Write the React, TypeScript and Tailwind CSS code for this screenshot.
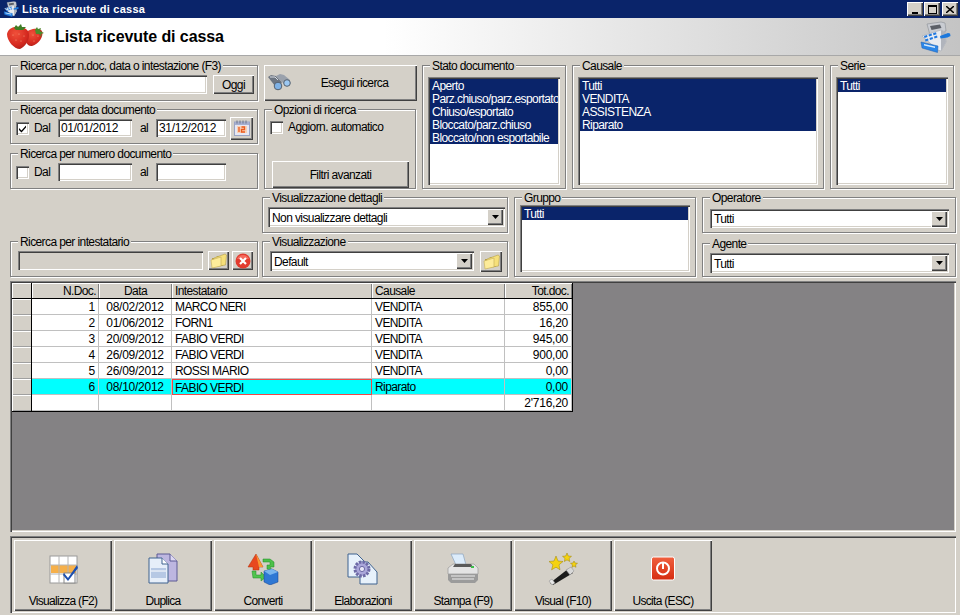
import React from "react";

const raised = "bg-[#d4d0c8] shadow-[inset_1px_1px_0_#fff,inset_-1px_-1px_0_#404040,inset_-2px_-2px_0_#808080]";
const sunken = "shadow-[inset_1px_1px_0_#808080,inset_2px_2px_0_#404040,inset_-1px_-1px_0_#fff,inset_-2px_-2px_0_#d4d0c8]";

function Group({ label, className, children }: { label: string; className: string; children?: React.ReactNode }) {
  return (
    <div className={"relative border border-[#808080] shadow-[inset_1px_1px_0_#fff,1px_1px_0_#fff] " + className}>
      <span className="absolute -top-[7px] left-[7px] bg-[#d4d0c8] px-[2px] leading-[14px] whitespace-nowrap">{label}</span>
      {children}
    </div>
  );
}

function Field({ className, value, disabled }: { className: string; value?: string; disabled?: boolean }) {
  return (
    <div className={`${sunken} ${disabled ? "bg-[#d4d0c8]" : "bg-white"} flex items-center pl-[3px] leading-[14px] tracking-[-0.3px] ${className}`}>{value}</div>
  );
}

function Check({ checked }: { checked?: boolean }) {
  return (
    <div className={`${sunken} bg-white w-[13px] h-[13px] shrink-0 flex items-center justify-center`}>
      {checked && (
        <svg width="9" height="9" viewBox="0 0 9 9"><path d="M1 4l2.5 2.5L8 1.5v2L3.5 8.5 1 6z" fill="#000" /></svg>
      )}
    </div>
  );
}

function ListBox({ items, className }: { items: string[]; className: string }) {
  return (
    <div className={`${sunken} bg-white p-[2px] ${className}`}>
      {items.map((t) => (
        <div key={t} className="bg-[#0a246a] text-white h-[13px] leading-[14px] pl-[2px] whitespace-nowrap overflow-hidden">{t}</div>
      ))}
    </div>
  );
}

function Combo({ value, className }: { value: string; className: string }) {
  return (
    <div className={`${sunken} bg-white flex items-center justify-between pl-[4px] pr-[2px] leading-[14px] ${className}`}>
      <span className="pt-[1px]">{value}</span>
      <div className={`${raised} w-[16px] h-[16px] flex items-center justify-center`}>
        <svg width="7" height="4" viewBox="0 0 7 4"><path d="M0 0h7L3.5 4z" fill="#000" /></svg>
      </div>
    </div>
  );
}

function Btn({ className, children }: { className: string; children?: React.ReactNode }) {
  return <div className={`${raised} flex items-center justify-center ${className}`}>{children}</div>;
}

function Register({ size }: { size: number }) {
  return (
    <svg width={size} height={size} viewBox="0 0 32 32">
      <path d="M8 3l14-2 4 1 1 8-16 4z" fill="#c9ccd2" stroke="#8a8e96" strokeWidth=".6" />
      <path d="M11 5l10-1.400 1.500 3.400-10 2z" fill="#5c6068" />
      <path d="M3 15l19-6 4 2 1 10-5 9-3-1z" fill="#e8ebf0" stroke="#9aa0aa" strokeWidth=".5" />
      <path d="M22 9l4 2 1 10-5 9z" fill="#b0b4bc" />
      <g fill="#1f78e0">
        <path d="M5 15l3-1 .5 2-3 1zM9.500 13.600l3-1 .5 2-3 1zM14 12.200l3-1 .5 2-3 1z" />
        <path d="M6 18.500l3-1 .5 2-3 1zM10.500 17l3-1 .5 2-3 1zM15 15.500l3-1 .5 2-3 1z" />
      </g>
      <path d="M2 21l17 4-.5 6.500L3 27z" fill="#2a86e8" stroke="#1a5cb0" strokeWidth=".5" />
      <path d="M5 23l11 2.500v1.500L5 24.500z" fill="#d8ebfc" />
      <path d="M21 15l8-3 2 .5.500 2.500-3 1.500-7 1z" fill="#1c78dc" />
    </svg>
  );
}

function Strawberry() {
  return (
    <svg width="38" height="25" viewBox="0 0 38 25">
      <defs>
        <radialGradient id="sb" cx=".4" cy=".3" r=".85"><stop offset="0" stopColor="#f0503a" /><stop offset=".6" stopColor="#d62a20" /><stop offset="1" stopColor="#9c1a14" /></radialGradient>
      </defs>
      <path d="M19 9c2-4 13-6 16-2 2 5-3 13-10 15-5 1-8-6-6-13z" fill="url(#sb)" />
      <path d="M28 6l2-3 1 2 3-1-1 3 4 2-3 1 1 3-3-3-3 0z" fill="#4e8a2c" />
      <path d="M0 10C1 5 6 2 12 3c6 0 10 3 10 8 0 6-4 12-9 14C7 25 0 17 0 10z" fill="url(#sb)" />
      <path d="M7 4l2-3 2 2 3-3 1 3 4 0-3 3-4 0-3 0z" fill="#3f7d24" />
      <g fill="#f9b890"><circle cx="6" cy="11" r=".5" /><circle cx="12" cy="10" r=".5" /><circle cx="17" cy="12" r=".5" /><circle cx="9" cy="16" r=".5" /><circle cx="14" cy="17" r=".5" /><circle cx="26" cy="11" r=".5" /><circle cx="31" cy="12" r=".5" /><circle cx="27" cy="17" r=".5" /></g>
    </svg>
  );
}

function Binoculars() {
  return (
    <svg width="24" height="20" viewBox="0 0 24 20">
      <path d="M1 4l3-2 5 1 6 6-3 5-4-1z" fill="#6e7682" />
      <path d="M9 3l4-2 4 1 6 5-2 4-5-1z" fill="#9aa1ac" />
      <path d="M3 4l5 0 3 3" fill="none" stroke="#d8dce2" />
      <circle cx="11" cy="13" r="3.800" fill="#7fb2e6" stroke="#55606e" />
      <circle cx="20" cy="10" r="3.300" fill="#9cc8f2" stroke="#55606e" />
    </svg>
  );
}

function Calendar() {
  return (
    <svg width="18" height="18" viewBox="0 0 18 18">
      <rect x="1.500" y="3" width="15" height="13.500" fill="#e6e8f4" stroke="#9aa4c4" />
      <rect x="2" y="3" width="14" height="3" fill="#a7b0d0" />
      <path d="M4 1.500v3M7 1.500v3M10 1.500v3M13 1.500v3" stroke="#6a7288" />
      <rect x="4" y="7" width="10" height="7" fill="#f9d0b4" />
      <path d="M6 8v5M8.500 8h3v2.500h-3V13h3.500" stroke="#ea5a1e" strokeWidth="1.300" fill="none" />
    </svg>
  );
}

function Folder() {
  return (
    <svg width="17" height="16" viewBox="0 0 17 16">
      <path d="M2 5h4l1-2h6v10H2z" fill="#b9a24a" />
      <path d="M4 5l11-4 1.500 1-1 10-12 2z" fill="#f6e07a" stroke="#b4a04c" strokeWidth=".6" />
      <path d="M1 7l10-3v9l-9 2z" fill="#fdec9a" stroke="#c4ad55" strokeWidth=".6" />
    </svg>
  );
}

function CloseRed() {
  return (
    <svg width="16" height="16" viewBox="0 0 16 16">
      <circle cx="8" cy="8" r="7.500" fill="#e23b2e" />
      <path d="M2 6a6.500 6.500 0 0112 0z" fill="#f56b5d" />
      <path d="M5 5l6 6M11 5l-6 6" stroke="#fff" strokeWidth="2.200" />
    </svg>
  );
}

const IconView = () => (
  <svg width="32" height="32" viewBox="0 0 32 32">
    <rect x="3" y="3" width="27" height="27" fill="#fff" stroke="#9a9a9a" />
    <rect x="4" y="12" width="25" height="8" fill="#f6b04a" />
    <path d="M12 3v27M21 3v27M3 12h27M3 21h27" stroke="#b4b4b4" />
    <rect x="17" y="20" width="11" height="10" fill="#fff" stroke="#888" />
    <path d="M17 20l4 5L30 12l1 3-10 13-5-6z" fill="#1c4fb0" />
  </svg>
);
const IconDup = () => (
  <svg width="32" height="32" viewBox="0 0 32 32">
    <path d="M10 1h13l7 7v20H10z" fill="#bdb6e0" stroke="#5c5a94" />
    <path d="M23 1v7h7" fill="#ddd8f2" stroke="#5c5a94" />
    <path d="M2 5h13l6 6v19H2z" fill="#e6eef9" stroke="#3f628f" />
    <path d="M15 5v6h6" fill="#fff" stroke="#3f628f" />
    <rect x="4" y="15" width="15" height="10" fill="#b6c8e4" />
    <path d="M4 18h15" stroke="#fff" />
  </svg>
);
const IconConv = () => (
  <svg width="32" height="32" viewBox="0 0 32 32">
    <path d="M9 1l7 13h-4v3H6v-3H1z" fill="#e8481f" stroke="#b0300e" strokeWidth=".5" />
    <path d="M9 1l7 13h-4z" fill="#f89a34" />
    <path d="M16 6h7l4 3v5h-4l2 3-5-1v-4h3V9h-7z" fill="#4cc04a" stroke="#1e8a24" strokeWidth=".5" />
    <path d="M5 18h4v4h5v-3l5 5-5 4v-3H6z" fill="#50c44e" stroke="#1e8a24" strokeWidth=".5" />
    <path d="M17 18l8-2 6 3v10l-8 3-6-3z" fill="#2f78d4" stroke="#123f8c" strokeWidth=".5" />
    <path d="M17 18l8-2 6 3-8 3z" fill="#79b5ee" />
  </svg>
);
const IconElab = () => (
  <svg width="32" height="32" viewBox="0 0 32 32">
    <path d="M1 1h9l8 8v15H1z" fill="#e7f1fb" stroke="#3f628f" />
    <path d="M13 9h8l9 10v12H13z" fill="#e7f1fb" stroke="#3f628f" />
    <circle cx="15" cy="16" r="7" fill="#aaa6da" stroke="#6d6aa6" strokeWidth="3" strokeDasharray="2.5 1.2" />
    <circle cx="15" cy="16" r="2.600" fill="#e7e6f6" stroke="#6d6aa6" />
  </svg>
);
const IconPrint = () => (
  <svg width="32" height="32" viewBox="0 0 32 32">
    <path d="M4 1h12l3 11H9z" fill="#dcecfb" stroke="#8aa4c0" strokeWidth=".7" />
    <path d="M1 15l5-4h21l4 4v6H1z" fill="#e4e4e4" stroke="#9a9a9a" strokeWidth=".7" />
    <path d="M1 21h30v6l-3 3H4l-3-3z" fill="#9b9b9b" />
    <path d="M4 23h24M5 26h22" stroke="#eee" />
    <path d="M8 11h16l2 3H6z" fill="#5a5a5a" />
    <rect x="24" y="13" width="3" height="2" fill="#3fbf4a" />
  </svg>
);
const IconWand = () => (
  <svg width="32" height="32" viewBox="0 0 32 32">
    <path d="M3 30l18-14 5 4-20 12z" fill="#1c1c1c" />
    <path d="M2 28l3 4 3-2-3-4z" fill="#e6e6e6" stroke="#888" strokeWidth=".5" />
    <path d="M19 17l5-3 3 4-4 4z" fill="#d8d8d8" stroke="#888" strokeWidth=".5" />
    <path d="M9 3l2 5 5 .5-4 3.300 1 5-4-2.600-4.400 2.600 1.300-5L2 8.500 7 8z" fill="#f5d210" stroke="#9a8308" strokeWidth=".5" />
    <path d="M20 0l1.300 3 3.200.3-2.400 2.100.7 3.100-2.800-1.600-2.700 1.600.7-3.100L15.500 3.300 18.700 3z" fill="#f5d210" stroke="#9a8308" strokeWidth=".5" />
    <path d="M27 8l1 2 2.500.3-2 1.500.5 2.500-2-1.300-2 1.300.5-2.500-2-1.500 2.500-.3z" fill="#f5d210" stroke="#9a8308" strokeWidth=".5" />
  </svg>
);
const IconExit = () => (
  <svg width="32" height="32" viewBox="0 0 32 32">
    <defs>
      <linearGradient id="ex" x1="0" y1="0" x2="0" y2="1"><stop offset="0" stopColor="#f0603e" /><stop offset="1" stopColor="#d62c10" /></linearGradient>
    </defs>
    <rect x="4.500" y="4" width="23" height="23" rx="2" fill="url(#ex)" stroke="#fff" />
    <circle cx="16" cy="15.500" r="6" fill="none" stroke="#fff" strokeWidth="2" />
    <path d="M16 10v6" stroke="#fff" strokeWidth="2" />
  </svg>
);

const cols = ["w-[67px]", "w-[73px]", "w-[200px]", "w-[133px]", "w-[67px]"];
const rows = [
  ["1", "08/02/2012", "MARCO NERI", "VENDITA", "855,00"],
  ["2", "01/06/2012", "FORN1", "VENDITA", "16,20"],
  ["3", "20/09/2012", "FABIO VERDI", "VENDITA", "945,00"],
  ["4", "26/09/2012", "FABIO VERDI", "VENDITA", "900,00"],
  ["5", "26/09/2012", "ROSSI MARIO", "VENDITA", "0,00"],
  ["6", "08/10/2012", "FABIO VERDI", "Riparato", "0,00"],
  ["", "", "", "", "2'716,20"],
];
const aligns = ["text-right pr-[3px]", "text-center", "text-left pl-[3px]", "text-left pl-[3px]", "text-right pr-[3px]"];

const tools: [string, React.ReactNode][] = [
  ["Visualizza (F2)", <IconView />],
  ["Duplica", <IconDup />],
  ["Converti", <IconConv />],
  ["Elaborazioni", <IconElab />],
  ["Stampa (F9)", <IconPrint />],
  ["Visual (F10)", <IconWand />],
  ["Uscita (ESC)", <IconExit />],
];

export default function App() {
  return (
    <div className="w-[960px] h-[615px] overflow-hidden bg-[#d4d0c8] text-black text-[12px] tracking-[-0.6px] flex flex-col font-['Liberation_Sans',Arial,sans-serif]">
      <div className="h-[18px] shrink-0 bg-[#0a246a] flex items-center justify-between pl-[3px] pr-[2px]">
        <div className="flex items-center gap-[3px]">
          <Register size={16} />
          <span className="text-white font-bold text-[11px] tracking-[0.25px]">Lista ricevute di cassa</span>
        </div>
        <div className="flex">
          <Btn className="w-[16px] h-[14px] mr-[1px] items-end pb-[2px]"><div className="w-[6px] h-[2px] bg-black" /></Btn>
          <Btn className="w-[16px] h-[14px] mr-[2px]"><div className="w-[9px] h-[9px] border border-black border-t-2" /></Btn>
          <Btn className="w-[16px] h-[14px]">
            <svg width="8" height="7" viewBox="0 0 8 7"><path d="M0 0l8 7M8 0L0 7" stroke="#000" strokeWidth="1.500" /></svg>
          </Btn>
        </div>
      </div>

      <div className="h-[38px] shrink-0 border-b border-[#a8a8a8] bg-[linear-gradient(90deg,#fff_40%,#c4c4c4_100%)] flex items-center justify-between pl-[7px] pr-[9px]">
        <div className="flex items-center">
          <Strawberry />
          <span className="ml-[10px] text-[16px] font-bold tracking-[-0.08px]">Lista ricevute di cassa</span>
        </div>
        <Register size={32} />
      </div>

      <div className="mt-[9px] ml-[10px] h-[124px] shrink-0 flex">
        <div className="w-[248px] flex flex-col">
          <Group label="Ricerca per n.doc, data o intestazione (F3)" className="h-[36px] flex items-start pl-[4px] pt-[9px]">
            <Field className="w-[192px] h-[19px]" />
            <Btn className="w-[41px] h-[19px] ml-[6px]">Oggi</Btn>
          </Group>
          <Group label="Ricerca per data documento" className="h-[35px] mt-[8px] flex items-center pl-[5px] pt-[3px]">
            <Check checked />
            <span className="ml-[5px] w-[24px]">Dal</span>
            <Field className="w-[74px] h-[18px]" value="01/01/2012" />
            <span className="w-[24px] text-center">al</span>
            <Field className="w-[70px] h-[18px]" value="31/12/2012" />
            <Btn className="w-[23px] h-[23px] ml-[4px]"><Calendar /></Btn>
          </Group>
          <Group label="Ricerca per numero documento" className="h-[36px] mt-[9px] flex items-center pl-[5px] pt-[2px]">
            <Check />
            <span className="ml-[5px] w-[24px]">Dal</span>
            <Field className="w-[74px] h-[18px]" />
            <span className="w-[24px] text-center">al</span>
            <Field className="w-[70px] h-[18px]" />
          </Group>
        </div>

        <div className="w-[153px] ml-[6px] flex flex-col">
          <Btn className="h-[36px] relative">
            <span className="absolute left-[3px] top-[8px]"><Binoculars /></span>
            <span className="ml-[28px]">Esegui ricerca</span>
          </Btn>
          <Group label="Opzioni di ricerca" className="h-[80px] mt-[8px] w-[152px] flex flex-col pl-[5px] pt-[8px]">
            <div className="flex items-center gap-[5px]"><Check /><span>Aggiorn. automatico</span></div>
            <Btn className="w-[137px] h-[27px] ml-[2px] mt-[25px]">Filtri avanzati</Btn>
          </Group>
        </div>

        <Group label="Stato documento" className="w-[144px] ml-[5px] p-[5px] pt-[11px]">
          <ListBox className="h-[108px]" items={["Aperto", "Parz.chiuso/parz.esportato", "Chiuso/esportato", "Bloccato/parz.chiuso", "Bloccato/non esportabile"]} />
        </Group>
        <Group label="Causale" className="w-[252px] ml-[6px] p-[5px] pt-[11px]">
          <ListBox className="h-[108px]" items={["Tutti", "VENDITA", "ASSISTENZA", "Riparato"]} />
        </Group>
        <Group label="Serie" className="w-[124px] ml-[6px] p-[5px] pt-[11px]">
          <ListBox className="h-[108px]" items={["Tutti"]} />
        </Group>
      </div>

      <div className="mt-[8px] ml-[10px] h-[80px] shrink-0 flex">
        <div className="w-[248px] flex flex-col justify-end">
          <Group label="Ricerca per intestatario" className="h-[36px] flex items-start pl-[7px] pt-[9px]">
            <Field disabled className="w-[185px] h-[19px]" />
            <Btn className="w-[21px] h-[19px] ml-[5px]"><Folder /></Btn>
            <Btn className="w-[21px] h-[19px] ml-[3px]"><CloseRed /></Btn>
          </Group>
        </div>
        <div className="w-[246px] ml-[4px] flex flex-col justify-between">
          <Group label="Visualizzazione dettagli" className="h-[36px] pl-[5px] pt-[9px]">
            <Combo className="w-[237px] h-[20px]" value="Non visualizzare dettagli" />
          </Group>
          <Group label="Visualizzazione" className="h-[36px] flex items-start pl-[7px] pt-[9px]">
            <Combo className="w-[204px] h-[20px]" value="Default" />
            <Btn className="w-[22px] h-[21px] ml-[6px]"><Folder /></Btn>
          </Group>
        </div>
        <Group label="Gruppo" className="w-[182px] ml-[6px] p-[5px] pt-[7px]">
          <ListBox className="h-[67px] w-[170px]" items={["Tutti"]} />
        </Group>
        <div className="w-[254px] ml-[6px] flex flex-col justify-between">
          <Group label="Operatore" className="h-[36px] pl-[7px] pt-[11px]">
            <Combo className="w-[239px] h-[19px]" value="Tutti" />
          </Group>
          <Group label="Agente" className="h-[34px] pl-[7px] pt-[9px]">
            <Combo className="w-[239px] h-[20px]" value="Tutti" />
          </Group>
        </div>
      </div>

      <div className={`mt-[4px] ml-[10px] w-[946px] h-[251px] shrink-0 bg-[#848284] p-[2px] ${sunken}`}>
        <div className="w-fit border-r border-b border-black">
          <div className="flex h-[16px] border-b border-black">
            <div className="w-[20px] h-[15px] bg-[#d4d0c8] border-r border-black shadow-[inset_1px_1px_0_#fff]" />
            {["N.Doc.", "Data", "Intestatario", "Causale", "Tot.doc."].map((h, i) => (
              <div key={h} className={`${cols[i]} ${aligns[i]} h-[15px] leading-[16px] bg-[#d4d0c8] shadow-[inset_1px_1px_0_#fff,inset_-1px_0_0_#808080]`}>{h}</div>
            ))}
          </div>
          {rows.map((r, ri) => (
            <div key={ri} className="flex h-[16px]">
              <div className="w-[20px] bg-[#d4d0c8] border-r border-black shadow-[inset_1px_1px_0_#fff,inset_0_-1px_0_#a0a0a0]" />
              {r.map((c, i) => {
                const focus = ri === 5 && i === 2;
                return (
                  <div
                    key={i}
                    className={`${cols[i]} leading-[16px] ${i === 1 || i === 0 || i === 4 ? "tracking-[-0.25px]" : ""} ${focus ? "border border-[#f04848] text-left pl-[2px] leading-[14px]" : `${aligns[i]} border-r border-b border-[#c0c0c0]`} ${ri === 5 ? "bg-[#00ffff]" : "bg-white"}`}
                  >
                    {c}
                  </div>
                );
              })}
            </div>
          ))}
        </div>
      </div>

      <div className={`mt-[4px] ml-[10px] w-[946px] h-[77px] shrink-0 flex gap-[2px] pl-[4px] pt-[4px] ${sunken}`}>
        {tools.map(([label, icon]) => (
          <div key={label} className={`${raised} w-[98px] h-[71px] flex flex-col items-center pt-[13px] tracking-[-0.7px]`}>
            {icon}
            <span className="mt-[9px] leading-[14px]">{label}</span>
          </div>
        ))}
      </div>
    </div>
  );
}
